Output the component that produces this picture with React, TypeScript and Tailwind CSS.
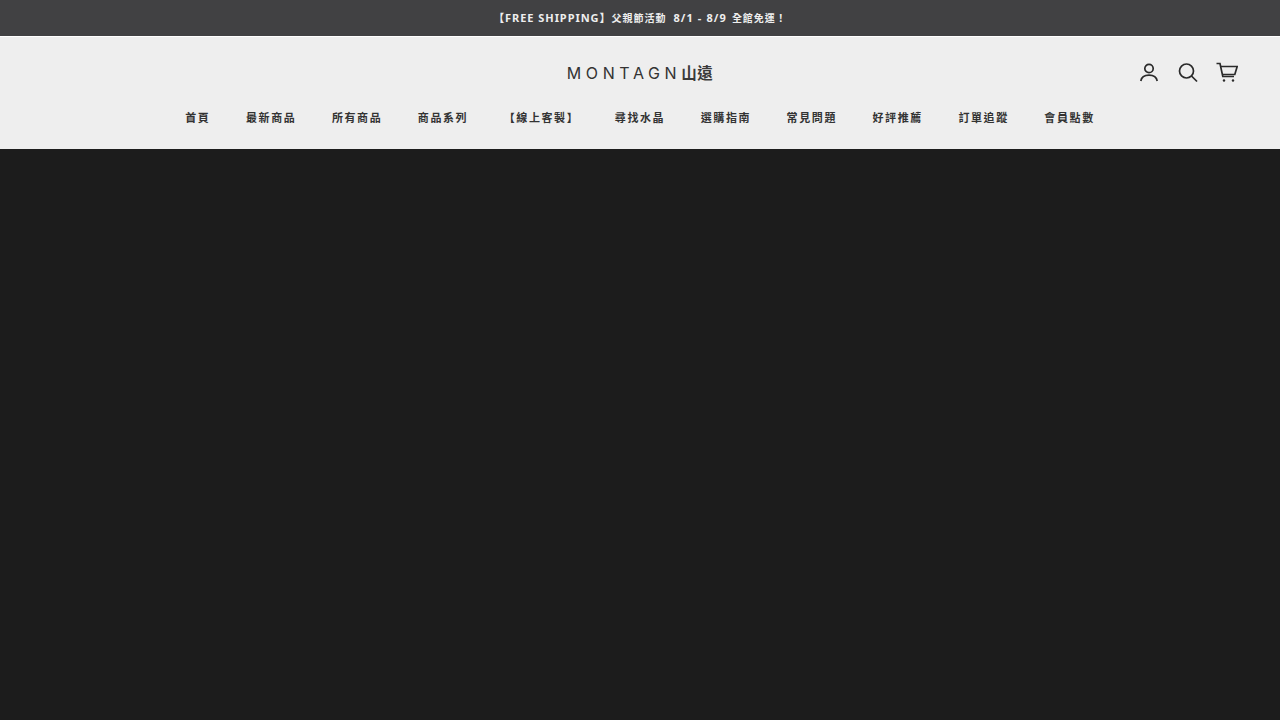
import React from 'react';

const navItems = ['首頁', '最新商品', '所有商品', '商品系列', '【線上客製】', '尋找水晶', '選購指南', '常見問題', '好評推薦', '訂單追蹤', '會員點數'];

const cjk = { fontFamily: '"Noto Sans", "Noto Sans CJK TC", sans-serif' };

const App: React.FC = () => {
  return (
    <div className="flex h-[720px] w-full flex-col overflow-hidden bg-[#1c1c1c]" style={cjk}>
      <div className="flex h-[36px] items-center justify-center bg-[#414143] pt-[1px] text-[11px] font-bold tracking-[1.1px] text-[#eeeeee]">
        <span className="tracking-[0.95px]">【FREE SHIPPING】</span>
        <span className="text-[10px] tracking-[1px]">父親節活動</span>
        <span className="ml-[7px]">8/1 - 8/9</span>
        <span className="ml-[5px] text-[10px] tracking-[1px]">全館免運！</span>
      </div>

      <header className="h-[113px] border-t border-white bg-[#eeeeee] text-[#222222]">
        <div className="flex h-[70px] items-center px-[42px]">
          <div className="w-[100px]" />
          <div className="flex flex-1 items-center justify-center pt-[2px]">
            <span className="font-['Inter','Noto_Sans_CJK_TC',sans-serif] text-[16px] tracking-[4.600px] text-[#333333]">
              MONTAGN<span className="text-[15.500px] font-bold tracking-[0.5px] text-[#3a3a3a]">山遠</span>
            </span>
          </div>
          <div className="flex w-[100px] items-center justify-end gap-[17px] pt-[1px]">
            <svg width="22" height="22" viewBox="0 0 22 22" fill="none" stroke="#2a2a2a" strokeWidth="1.7">
              <circle cx="11" cy="6.500" r="4.200" />
              <path d="M2.800 19c.6-3.900 3.800-5.900 8.200-5.900s7.600 2 8.200 5.900" />
            </svg>
            <svg width="22" height="22" viewBox="0 0 22 22" fill="none" stroke="#2a2a2a" strokeWidth="1.7">
              <circle cx="9.500" cy="9" r="7" />
              <path d="M14.500 14l5.500 5.500" />
            </svg>
            <svg width="22" height="22" viewBox="0 0 22 22" fill="none" stroke="#2a2a2a" strokeWidth="1.7">
              <path d="M0.500 1.500h3.500l2.800 13h11.200" />
              <path d="M4.600 4.500h16.600l-2.400 8H6.300" />
              <circle cx="8" cy="18.500" r="1.200" fill="#2a2a2a" stroke="none" />
              <circle cx="17" cy="18.500" r="1.200" fill="#2a2a2a" stroke="none" />
            </svg>
          </div>
        </div>
        <nav className="flex items-center justify-center gap-[35.5px] pt-[3px] text-[11px] font-bold tracking-[1.6px] text-[#333333]">
          {navItems.map((item) => (
            <a key={item}>{item}</a>
          ))}
        </nav>
      </header>

      <main className="flex-1 bg-[#1c1c1c]" />
    </div>
  );
};

export default App;
